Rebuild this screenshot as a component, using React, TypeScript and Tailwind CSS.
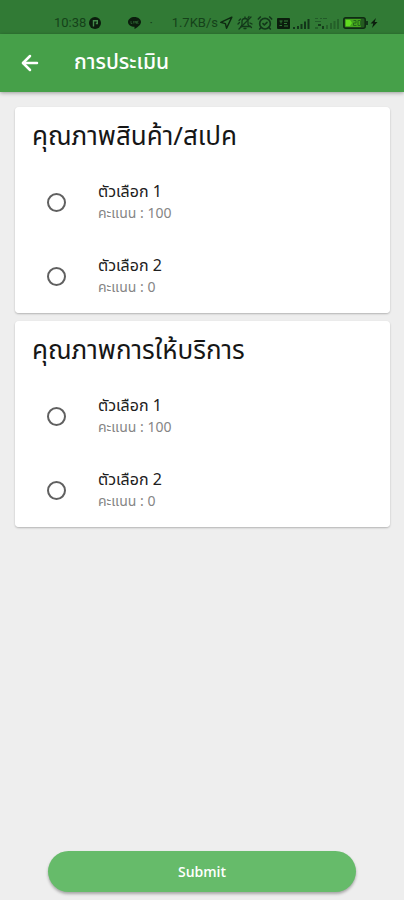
import { useState } from "react";
import { ArrowLeft, AlarmClockCheck, Navigation } from "lucide-react";

type Option = { label: string; score: number };
type Question = { id: string; title: string; options: Option[] };

const questions: Question[] = [
  {
    id: "quality",
    title: "คุณภาพสินค้า/สเปค",
    options: [
      { label: "ตัวเลือก 1", score: 100 },
      { label: "ตัวเลือก 2", score: 0 },
    ],
  },
  {
    id: "service",
    title: "คุณภาพการให้บริการ",
    options: [
      { label: "ตัวเลือก 1", score: 100 },
      { label: "ตัวเลือก 2", score: 0 },
    ],
  },
];

const AppBadge = () => (
  <svg width="12" height="12" viewBox="0 0 12 12">
    <circle cx="6" cy="6" r="6" fill="#0b1d0d" />
    <path d="M4.500 9.500V3.700h3.800v2.800H6.800" fill="none" stroke="#43894a" strokeWidth="1.400" />
  </svg>
);

const ChatBadge = () => (
  <svg width="13" height="12" viewBox="0 0 13 12">
    <path d="M6.500 0C10 0 13 2.200 13 5c0 3-4 5.500-6.500 7V9.800C3 9.800 0 7.900 0 5s3-5 6.500-5z" fill="#0b1d0d" />
    <path d="M3 4v2.500h1.300M5.600 4v2.500M7 6.500V4l1.500 2.500V4M10.500 4H9.600v2.500h.9" fill="none" stroke="#2f6a35" strokeWidth=".7" />
  </svg>
);

const MutedBell = () => (
  <svg width="16" height="16" viewBox="0 0 16 16" fill="none" stroke="#12381a" strokeWidth="1.300" strokeLinecap="round">
    <path d="M4 11.500h8.500L11 9.500V6.500a3 3 0 0 0-6 0v3z" />
    <path d="M7 13.500h2M8 3.500V2M2 14L14 2M2.500 7.500L1 9M3.500 4L2 5.500M13 8l2 1M13 11l1.500 1.500M11 3l1-1.500" />
  </svg>
);

const VolteBadge = () => (
  <svg width="13" height="11" viewBox="0 0 13 11">
    <rect width="13" height="11" rx="1" fill="#0b1d0d" />
    <path d="M2.500 3h3M4 3v2.500M7 3h4M2.500 7.500h2.500M7 5.500h3M7 8h4" stroke="#327a37" />
  </svg>
);

const Signal = () => (
  <svg width="17" height="11" viewBox="0 0 17 11">
    <path d="M1 11V9M5 11V8M8.500 11V6M12 11V3.500M15.500 11V1" stroke="#12351a" strokeWidth="2" />
  </svg>
);

const WeakSignal = () => (
  <svg width="25" height="12" viewBox="0 0 25 12">
    <path d="M1 1.500h3M6 1.500h2M9 1.500h4M1 4.500h6" stroke="#225b29" />
    <path d="M4 8h3M9 12v-3" stroke="#163d1b" strokeWidth="2" />
    <path d="M1 11h3M13 12V8M17 12V6M20.500 12V4M24 12V2" stroke="#246029" strokeWidth="2" />
  </svg>
);

const Battery = () => (
  <svg width="35" height="12" viewBox="0 0 35 12">
    <rect x=".8" y=".8" width="21.400" height="10.400" rx="2" fill="#245b20" stroke="#0f2b12" strokeWidth="1.500" />
    <rect x="2" y="2" width="16" height="8" rx="1" fill="#44a51d" />
    <path d="M3 3h4l2 3-2 3H3z" fill="#62dc20" />
    <path d="M10.500 3.500h2.500v2.500h-2.500v2.500h3M15 3.500v5h2.500v-5z" fill="none" stroke="#24691b" />
    <path d="M24 4v4" stroke="#12351a" strokeWidth="2" />
    <path d="M33 1l-5.500 5.500h2.800L29 11l5.500-6h-2.800z" fill="#0b1d0d" />
  </svg>
);

const StatusBar = () => (
  <div className="flex h-[34px] items-end bg-[#317a35] pr-[26px] pb-[3px] pl-[54px] font-['Roboto',sans-serif] text-[13px] text-[#15421a]">
    <div className="flex h-4 flex-1 items-center gap-[3px]">
      <span>10:38</span>
      <AppBadge />
      <div className="ml-6 flex items-center gap-2">
        <ChatBadge />
        <span>·</span>
      </div>
    </div>
    <div className="flex h-4 items-center gap-1">
      <div className="flex items-center gap-px">
        <span>1.7KB/s</span>
        <Navigation size={14} color="#0d2a11" strokeWidth={2.5} />
      </div>
      <MutedBell />
      <AlarmClockCheck size={16} color="#12381a" strokeWidth={2.5} />
      <div className="flex items-center gap-[3px]">
        <VolteBadge />
        <Signal />
      </div>
      <WeakSignal />
      <Battery />
    </div>
  </div>
);

const QuestionCard = ({ question }: { question: Question }) => {
  const [selected, setSelected] = useState<number | null>(null);

  return (
    <fieldset className="rounded bg-white shadow-[0_1px_2px_rgba(0,0,0,0.25)]">
      <legend className="float-left h-[58px] w-full px-[17px] pt-3 text-[26px] leading-9 text-[#161616]">
        {question.title}
      </legend>
      <div className="clear-both">
        {question.options.map((option, index) => (
          <label key={option.label} className="flex h-[74px] items-center gap-8 pl-8">
            <input
              type="radio"
              name={question.id}
              checked={selected === index}
              onChange={() => setSelected(index)}
              className="size-[19px] shrink-0 appearance-none rounded-full border-2 border-[#606060] checked:border-[6px] checked:border-[#43a047]"
            />
            <span className="flex flex-col">
              <span className="text-base leading-6 text-[#202020]">{option.label}</span>
              <span className="text-sm leading-5 text-[#858585]">คะแนน : {option.score}</span>
            </span>
          </label>
        ))}
      </div>
    </fieldset>
  );
};

const App = () => {
  return (
    <div className="flex min-h-screen flex-col bg-[#eeeeee] font-['Noto_Sans_Thai','Prompt','Kanit',sans-serif]">
      <StatusBar />
      <header className="flex h-[58px] items-center gap-8 bg-[#46a049] px-[18px] text-white shadow-[0_1px_4px_rgba(0,0,0,0.35)]">
        <button type="button" aria-label="ย้อนกลับ">
          <ArrowLeft size={24} strokeWidth={2.5} />
        </button>
        <h1 className="text-[21px] font-medium">การประเมิน</h1>
      </header>

      <form className="flex flex-1 flex-col" onSubmit={(e) => e.preventDefault()}>
        <div className="flex flex-1 flex-col gap-2 pt-[15px] pr-[14px] pl-[15px]">
          {questions.map((question) => (
            <QuestionCard key={question.id} question={question} />
          ))}
        </div>
        <div className="px-12 pt-4 pb-2">
          <button
            type="submit"
            className="h-[41px] w-full rounded-full bg-[#66bb6a] font-['Open_Sans',sans-serif] text-sm font-semibold text-white shadow-[0_2px_3px_rgba(0,0,0,0.3)]"
          >
            Submit
          </button>
        </div>
      </form>
    </div>
  );
};

export default App;
